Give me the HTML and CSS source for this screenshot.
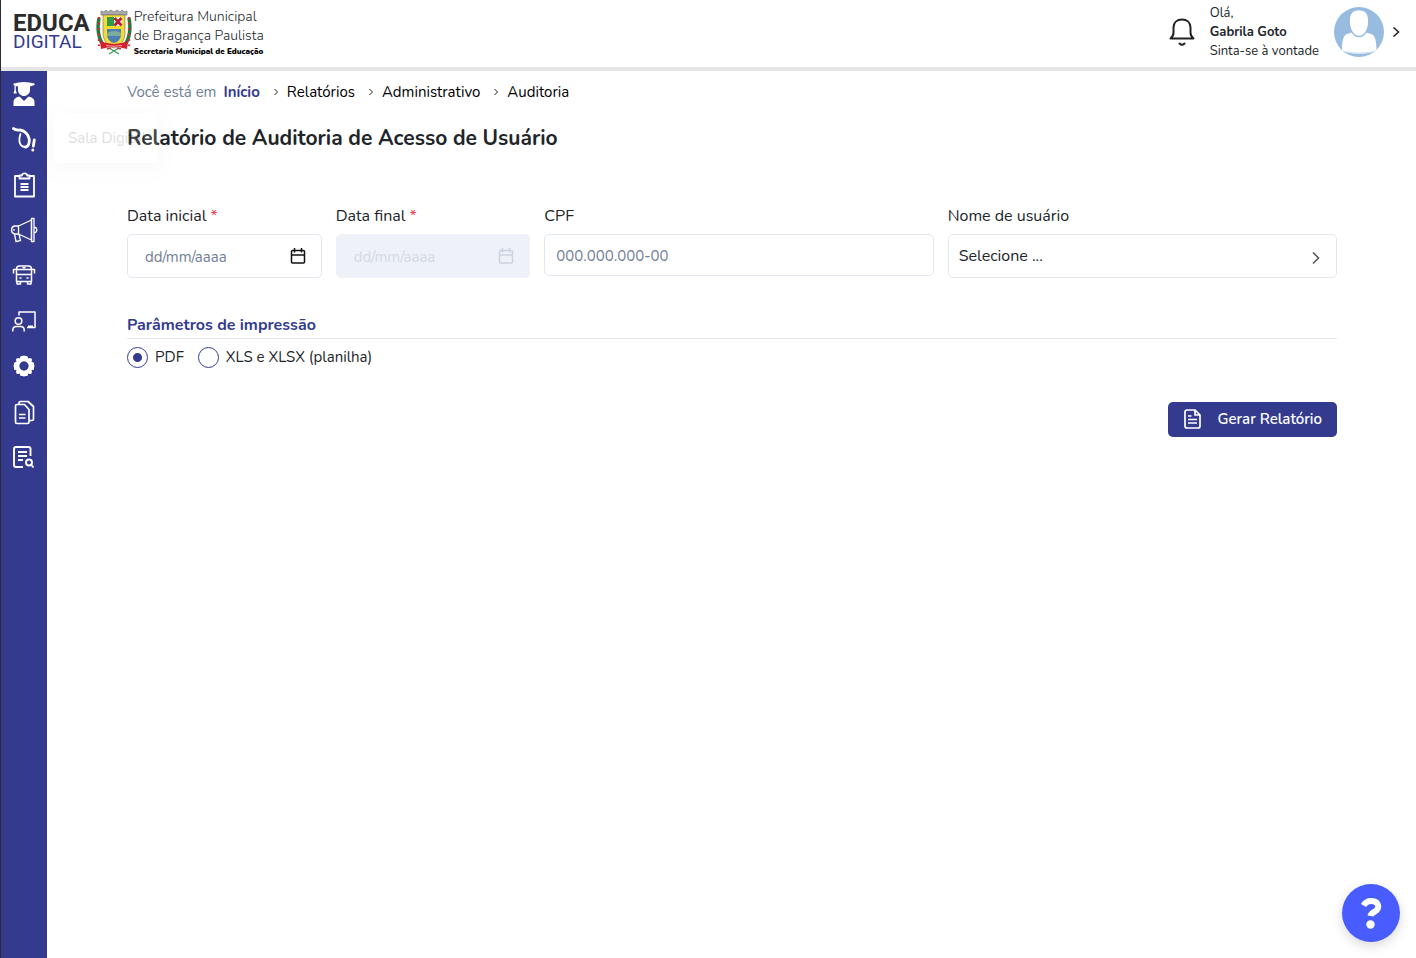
FILE: index.html
```html
<!DOCTYPE html>
<html lang="pt-BR">
  <head>
    <meta charset="UTF-8" />
    <meta name="viewport" content="width=device-width, initial-scale=1.0" />
    <title>Relatório de Auditoria de Acesso de Usuário</title>
    <link rel="stylesheet" href="styles.css">
  </head>
  <body>
    <header class="topo">
      <a class="marca" href="#">
        <span class="marca-nome">
          <span class="marca-educa">EDUCA</span>
          <span class="marca-digital">DIGITAL</span>
        </span>
        <!-- Brasão do município -->
        <svg class="brasao" viewBox="0 0 36 48" aria-hidden="true">
          <path d="M5 7V3l3 1 2-2 2 2 3-2 3 2 3-2 3 2 2-2 2 2 3-1v4z" fill="#aaa" stroke="#777" stroke-width=".7" />
          <path d="M3 10C1 20 2 32 9 39M33 10c2 10 1 22-6 29" fill="none" stroke="#247a3c" stroke-width="3.500" />
          <path d="M3 9v29M33 9v29" fill="none" stroke="#c8343d" stroke-width="2.400" stroke-dasharray="2 3.500" />
          <path d="M7 7h22v18c0 8-5 13-11 15C12 38 7 33 7 25z" fill="#f3dc32" stroke="#666" stroke-width=".6" />
          <path d="M11 9h7v9h-7z" fill="#2f9a48" />
          <path d="M18 9h8v9h-8z" fill="#eee" />
          <path d="M18.500 10l7 7.500m0-7.500l-7 7.500" stroke="#b61e35" stroke-width="2.600" />
          <path d="M11 21h14v5c0 5-3 8-7 9-4-1-7-4-7-9z" fill="#4d7fb5" />
          <path d="M11 25q7-4 14 0v3H11z" fill="#7cad9c" />
          <path d="M4 33q14 6 28 0l-1 8q-13-4-26 0z" fill="#d4202d" />
          <path d="M10 37.500q8 1.500 16 0" fill="none" stroke="#f2a3a6" stroke-width="1" />
          <path d="M13 40l10 6m0-6l-10 6" stroke="#3b9b57" stroke-width="1.300" />
          <path d="M11 41l4-1m10 1l-4-1" stroke="#c8343d" stroke-width="1.300" />
        </svg>
        <span class="prefeitura">
          <span>Prefeitura Municipal</span>
          <span>de Bragança Paulista</span>
          <strong>Secretaria Municipal de Educação</strong>
        </span>
      </a>

      <div class="usuario">
        <button class="btn-icone" type="button" aria-label="Notificações">
          <svg width="26" height="28" viewBox="0 0 26 28" fill="none" stroke="#222" stroke-width="2" stroke-linejoin="round" stroke-linecap="round">
            <path d="M1.500 20.500c2-1.500 3-3 3-6V9.500C4.500 4.500 8 1.500 13 1.500s8.500 3 8.500 8v5c0 3 1 4.500 3 6z" />
            <path d="M10.500 25.500q2.500 2.500 5 0" />
          </svg>
        </button>
        <div class="saudacao">
          <span>Olá,</span>
          <strong>Gabrila Goto</strong>
          <span>Sinta-se à vontade</span>
        </div>
        <button class="btn-icone perfil" type="button" aria-label="Abrir menu do perfil">
          <svg width="50" height="50" viewBox="0 0 50 50">
            <circle cx="25" cy="25" r="25" fill="#97bce0" />
            <path d="M8 44c0-9 1-16 5-17 2-.7 3.500-1 5-1.500 2.500 5.500 11.500 5.500 14 0 1.500.5 3 .8 5 1.500 4.500 1 5.500 8 5.500 17-9 3.500-25.500 3.500-34.500 0z" fill="#fff" />
            <path d="M25 2.500c6.500 0 9.800 4 9.800 11 0 9-4 16-9.800 16s-9.800-7-9.800-16c0-7 3.300-11 9.800-11z" fill="#fff" stroke="#97bce0" stroke-width="1.300" />
            <path d="M8.500 44q16.500 4.500 33 0" fill="none" stroke="#c9dff2" stroke-width="1" />
          </svg>
          <svg width="8" height="12" viewBox="0 0 8 12" fill="none" stroke="#222" stroke-width="1.600">
            <path d="M1.500 1.500L6.500 6l-5 4.500" />
          </svg>
        </button>
      </div>
    </header>

    <div class="pagina">
      <nav class="menu" aria-label="Menu principal">
        <ul class="menu-lista">
          <li>
            <a href="#" aria-label="Acadêmico">
              <svg viewBox="0 0 24 26" fill="#fff" stroke="none">
                <path d="M1.500 2.500Q12-.5 22.500 2.500V4L18 5.500V9c0 3.500-3 6-6 6s-6-2.500-6-6V5.500L3.800 5v4l1 3.500H1.500l1-3.500V4.500L1.500 4z" />
                <path d="M1.500 25v-4c0-3 2-4.500 6-5.500l4.500 4.500 4.500-4.500c4 1 6 2.500 6 5.500v4z" />
              </svg>
            </a>
          </li>
          <li class="item-sala">
            <a href="#" aria-label="Sala Digital">
              <svg viewBox="0 0 24 26" fill="none" stroke="#fff" stroke-linecap="round" stroke-linejoin="round">
                <path d="M1.500 2.500c2 2 4 1.500 6.500 1.500 4.500.5 8.500 4.500 9.200 9 .4 4-.8 8-4 8" stroke-width="2.800" />
                <path d="M8.500 8c-1 3-1.500 7-.5 9.500.8 2 2.500 3.500 4.500 3.500" stroke-width="1.800" />
                <path d="M22.300 14l-1 6" stroke-width="2.800" />
                <path d="M20.800 24v.2" stroke-width="2.800" />
              </svg>
            </a>
            <span class="dica">Sala Digital</span>
          </li>
          <li>
            <a href="#" aria-label="Planejamento">
              <svg viewBox="0 0 24 26" fill="none" stroke="#fff" stroke-width="1.800" stroke-linejoin="round">
                <path d="M7.500 4H3v20.500h19V4h-4.500" />
                <path d="M7.500 6.500V3.500h2.300a2.800 2.800 0 0 1 5.400 0h2.300v3z" />
                <path d="M8.500 12h8M8.500 15h8M8.500 18h8" />
              </svg>
            </a>
          </li>
          <li>
            <a href="#" aria-label="Comunicados">
              <svg class="icone-largo" viewBox="0 0 28 26" fill="none" stroke="#fff" stroke-width="1.300" stroke-linejoin="round">
                <path d="M8.500 9v8H4.500C.5 16 .5 10 4.500 9zM8.500 9L21.500 3v20L8.500 17" />
                <path d="M21.500 1.500h2.500v23h-2.500zM24 10.500h1.200c2.200.5 2.200 4.500 0 5H24" />
                <path d="M4.500 17l1.500 7.500 4.500-.8L9 17M4 12v2" />
              </svg>
            </a>
          </li>
          <li>
            <a href="#" aria-label="Transporte">
              <svg viewBox="0 0 24 26" fill="none" stroke="#fff" stroke-width="1.500" stroke-linejoin="round">
                <path d="M4.500 19.500V7q0-3 3-3h9q3 0 3 3v12.500zM4.500 7.500h15M4.500 12.500h15" />
                <path d="M5 19.500V22h3.500v-2.500M15.500 19.500V22H19v-2.500M4.500 7.500H1.500v4M19.500 7.500h3v4" />
                <path d="M7.500 16h2M14.500 16h2M10.500 5.700h3" />
              </svg>
            </a>
          </li>
          <li>
            <a href="#" aria-label="Docentes">
              <svg viewBox="0 0 24 26" fill="none" stroke="#fff" stroke-width="1.500" stroke-linejoin="round">
                <path d="M7 7.500V4h16v15.500h-8" />
                <circle cx="6.500" cy="13" r="3.300" />
                <path d="M.8 23.500v-1.500q0-3.500 3.700-3.500h4q3.700 0 3.700 3.500v1.500" />
                <path d="M16 18.500h5" stroke-width="2" />
              </svg>
            </a>
          </li>
          <li>
            <a href="#" aria-label="Configurações">
              <svg viewBox="0 0 24 26" fill="none" stroke="#fff">
                <circle cx="12" cy="13" r="6.700" stroke-width="4.400" />
                <path d="M12 4.500v17M3.500 13h17M6 7l12 12M18 7L6 19" stroke-width="4" stroke-linecap="round" stroke-dasharray="1.500 14" />
                <path d="M9.500 4.500h5M9.500 21.500h5M3.500 10.500v5M20.500 10.500v5" stroke-width="3" stroke-linecap="round" />
                <circle cx="12" cy="13" r="4.400" fill="#343b8f" stroke="none" />
              </svg>
            </a>
          </li>
          <li>
            <a href="#" aria-label="Documentos">
              <svg viewBox="0 0 24 26" fill="none" stroke="#fff" stroke-width="1.700" stroke-linejoin="round">
                <path d="M5 5.500h7.500l4.500 5v12.500q0 1.500-1.500 1.500H5q-1.500 0-1.500-1.500V7q0-1.500 1.500-1.500z" />
                <path d="M7 5.500V4q0-1.500 1.500-1.500H16l5.500 5V20q0 1.500-1.500 1.500H17" />
                <path d="M7 15.500h6.500M7 19h6.500" />
              </svg>
            </a>
          </li>
          <li>
            <a href="#" aria-label="Relatórios">
              <svg viewBox="0 0 24 26" fill="none" stroke="#fff" stroke-width="1.900" stroke-linejoin="round">
                <path d="M11 23H4q-2 0-2-2V5q0-2 2-2h12.500q2 0 2 2v7" />
                <path d="M6 8h9M6 12h9M6 16h5" />
                <circle cx="17" cy="18.500" r="3" />
                <path d="M19 20.500l2.500 3" />
              </svg>
            </a>
          </li>
        </ul>
      </nav>

      <main class="conteudo">
        <nav class="trilha" aria-label="Você está em">
          <span class="trilha-rotulo">Você está em</span>
          <a class="trilha-inicio" href="#">Início</a>
          <svg class="trilha-seta" viewBox="0 0 6 8"><path d="M1.500 1l3 3-3 3" /></svg>
          <a href="#">Relatórios</a>
          <svg class="trilha-seta" viewBox="0 0 6 8"><path d="M1.500 1l3 3-3 3" /></svg>
          <a href="#">Administrativo</a>
          <svg class="trilha-seta" viewBox="0 0 6 8"><path d="M1.500 1l3 3-3 3" /></svg>
          <a href="#">Auditoria</a>
        </nav>

        <h1>Relatório de Auditoria de Acesso de Usuário</h1>

        <form>
          <div class="filtros">
            <div class="campo">
              <label for="data-inicial">Data inicial <span class="obrigatorio">*</span></label>
              <div class="caixa">
                <input class="data" type="text" id="data-inicial" inputmode="numeric" placeholder="dd/mm/aaaa" required />
                <svg class="calendario" viewBox="0 0 16 18"><path d="M2.500 3.500h11q1 0 1 1v10.500q0 1-1 1h-11q-1 0-1-1V4.500q0-1 1-1zM1.500 8h13M4.500 1v4.500M11.500 1v4.500" /></svg>
              </div>
            </div>

            <div class="campo">
              <label for="data-final">Data final <span class="obrigatorio">*</span></label>
              <div class="caixa">
                <input class="data" type="text" id="data-final" inputmode="numeric" placeholder="dd/mm/aaaa" required disabled />
                <svg class="calendario" viewBox="0 0 16 18"><path d="M2.500 3.500h11q1 0 1 1v10.500q0 1-1 1h-11q-1 0-1-1V4.500q0-1 1-1zM1.500 8h13M4.500 1v4.500M11.500 1v4.500" /></svg>
              </div>
            </div>

            <div class="campo">
              <label for="cpf">CPF</label>
              <input type="text" id="cpf" inputmode="numeric" placeholder="000.000.000-00" />
            </div>

            <div class="campo">
              <label for="nome-usuario">Nome de usuário</label>
              <div class="caixa">
                <select id="nome-usuario">
                  <option>Selecione ...</option>
                </select>
                <svg class="seta" viewBox="0 0 8 14"><path d="M1 1.500L6.500 7 1 12.500" /></svg>
              </div>
            </div>
          </div>

          <fieldset class="impressao">
            <legend>Parâmetros de impressão</legend>
            <div class="opcoes">
              <label><input type="radio" name="formato" value="pdf" checked />PDF</label>
              <label><input type="radio" name="formato" value="xls" />XLS e XLSX (planilha)</label>
            </div>
          </fieldset>

          <div class="acoes">
            <button class="btn-gerar" type="submit">
              <svg width="17" height="20" viewBox="0 0 17 20" fill="none" stroke="#fff" stroke-width="1.700" stroke-linejoin="round" aria-hidden="true">
                <path d="M3 1h8l5 5v11q0 2-2 2H3q-2 0-2-2V3q0-2 2-2zM11 1v5h5M4 7h3.500M4 10.500h9M4 14h9" />
              </svg>
              Gerar Relatório
            </button>
          </div>
        </form>
      </main>
    </div>

    <button class="ajuda" type="button" aria-label="Ajuda">
      <svg width="22" height="31" viewBox="0 0 22 31" fill="none" stroke="#fff">
        <path d="M3.500 7.500C6 3.500 10 2.700 13.500 3.300c5 1 6 6.200 3 9-2.500 2.200-5.500 2.500-6 5.700" stroke-width="6" stroke-linejoin="round" />
        <circle cx="10.500" cy="26.500" r="4.200" fill="#fff" stroke="none" />
      </svg>
    </button>
  </body>
</html>
```
FILE: styles.css
```css
:root {
  --cor-primaria: #343b8f;
  --cor-texto: #212529;
  --cor-suave: #718096;
  --cor-borda: #e2e8f0;
}

* {
  box-sizing: border-box;
}

body {
  margin: 0;
  min-height: 100vh;
  display: flex;
  flex-direction: column;
  border-left: 1px solid #2b2c38;
  background-color: #ffffff;
  color: var(--cor-texto);
  font-family: Nunito, Lato, sans-serif;
  font-size: 15px;
  line-height: 24px;
}

a {
  color: inherit;
  text-decoration: none;
}

svg {
  display: block;
  flex-shrink: 0;
}

input,
select,
button {
  font: inherit;
  color: inherit;
}

button {
  border: none;
  cursor: pointer;
}

/* Topo */
.topo {
  display: flex;
  justify-content: space-between;
  align-items: center;
  height: 71px;
  padding: 0 16px 4px 12px;
  border-bottom: 4px solid #e5e5e5;
}

.marca {
  display: flex;
  align-items: center;
}

.marca-nome {
  display: flex;
  flex-direction: column;
  font-family: Roboto, sans-serif;
}

.marca-educa {
  font-size: 24px;
  font-weight: 700;
  line-height: 19px;
  color: #2b2b2b;
}

.marca-digital {
  font-size: 19px;
  line-height: 17px;
  color: var(--cor-primaria);
}

.brasao {
  width: 36px;
  height: 48px;
  margin-left: 6px;
}

.prefeitura {
  display: flex;
  flex-direction: column;
  padding: 2px 0 0 2px;
  font-size: 14px;
  font-weight: 300;
  line-height: 19px;
}

.prefeitura strong {
  font-size: 8px;
  font-weight: 900;
  line-height: 14px;
  color: #000000;
}

.usuario {
  display: flex;
  align-items: center;
  gap: 15px;
}

.btn-icone {
  display: flex;
  align-items: center;
  padding: 0;
  background: none;
}

.saudacao {
  display: flex;
  flex-direction: column;
  padding-top: 2px;
  font-size: 13px;
  line-height: 19px;
}

.perfil {
  gap: 8px;
}

/* Menu lateral */
.pagina {
  flex: 1;
  display: flex;
}

.menu {
  width: 46px;
  flex-shrink: 0;
  background-color: var(--cor-primaria);
}

.menu-lista {
  display: grid;
  grid-auto-rows: 1fr;
  height: 409px;
  margin: 0;
  padding: 0;
  list-style: none;
}

.menu-lista li,
.menu-lista a {
  display: flex;
  align-items: center;
  justify-content: center;
}

.menu-lista svg {
  width: 24px;
  height: 26px;
}

.menu-lista .icone-largo {
  width: 28px;
}

.item-sala {
  position: relative;
}

.dica {
  position: absolute;
  left: 53px;
  top: -3px;
  padding: 13px 12px 13px 14px;
  border-radius: 4px;
  background-color: #ffffff;
  box-shadow: 0 4px 16px rgba(0, 0, 0, 0.2);
  white-space: nowrap;
  opacity: 0.15;
  pointer-events: none;
}

/* Conteúdo */
.conteudo {
  flex: 1;
  padding: 9px 79px 40px 80px;
}

.trilha {
  display: flex;
  align-items: center;
  color: #000000;
}

.trilha-rotulo {
  margin-right: 7px;
  color: var(--cor-suave);
}

.trilha-inicio {
  font-weight: 700;
  color: var(--cor-primaria);
}

.trilha-seta {
  width: 6px;
  height: 8px;
  margin: 0 8px 0 13px;
  fill: none;
  stroke: #222222;
}

h1 {
  margin: 18px 0 50px;
  font-size: 21px;
  font-weight: 700;
  line-height: 32px;
}

.filtros {
  display: grid;
  grid-template-columns: 1fr 1fr 2fr 2fr;
  align-items: start;
  gap: 14px;
}

.campo {
  display: flex;
  flex-direction: column;
  gap: 6px;
  min-width: 0;
}

.campo label,
.impressao legend {
  font-size: 16px;
}

.obrigatorio {
  color: #f03e50;
}

/* O ícone fica na mesma célula do campo */
.caixa {
  display: grid;
  align-items: center;
}

.caixa > * {
  grid-area: 1 / 1;
}

.campo input,
.campo select {
  width: 100%;
  height: 42px;
  padding: 2px 11px 0;
  border: 1px solid var(--cor-borda);
  border-radius: 5px;
  background-color: #ffffff;
  appearance: none;
}

.campo select,
.campo .data {
  height: 44px;
}

.campo select {
  padding: 0 10px;
  font-size: 16px;
}

.campo .data {
  padding: 2px 17px 0;
}

.campo input::placeholder {
  color: var(--cor-suave);
  opacity: 1;
}

.campo input:disabled {
  border-color: #eef2f8;
  background-color: #eef2f8;
}

.campo input:disabled::placeholder {
  color: #d3dae4;
}

.calendario {
  justify-self: end;
  width: 16px;
  height: 18px;
  margin-right: 16px;
  fill: none;
  stroke: #111111;
  stroke-width: 1.5;
  pointer-events: none;
}

input:disabled + .calendario {
  stroke: #cbd3df;
}

.seta {
  justify-self: end;
  width: 8px;
  height: 14px;
  margin: 4px 17px 0 0;
  fill: none;
  stroke: #555555;
  stroke-width: 1.6;
  pointer-events: none;
}

.impressao {
  margin: 35px 0 0;
  padding: 0;
  border: none;
}

.impressao legend {
  width: 100%;
  padding: 0 0 1px;
  border-bottom: 1px solid #e5e7eb;
  font-weight: 700;
  color: var(--cor-primaria);
}

.opcoes {
  display: flex;
  gap: 14px;
  padding-top: 6px;
}

.opcoes label {
  display: flex;
  align-items: center;
  gap: 7px;
}

.opcoes input {
  width: 21px;
  height: 21px;
  margin: 0;
  border: 1px solid var(--cor-primaria);
  border-radius: 50%;
  appearance: none;
}

.opcoes input:checked {
  background: radial-gradient(circle, var(--cor-primaria) 4px, #ffffff 5px);
}

.acoes {
  display: flex;
  justify-content: flex-end;
  margin-top: 33px;
}

.btn-gerar {
  display: flex;
  align-items: center;
  gap: 17px;
  height: 35px;
  padding: 0 15px 1px 16px;
  border-radius: 5px;
  background-color: var(--cor-primaria);
  color: #ffffff;
  font-weight: 600;
}

.btn-gerar:hover {
  background-color: #2a3075;
}

.ajuda {
  position: fixed;
  right: 16px;
  bottom: 16px;
  display: flex;
  align-items: center;
  justify-content: center;
  width: 58px;
  height: 58px;
  padding: 0;
  border-radius: 50%;
  background-color: #485cff;
  box-shadow: 0 4px 12px rgba(0, 0, 0, 0.15);
}
```
